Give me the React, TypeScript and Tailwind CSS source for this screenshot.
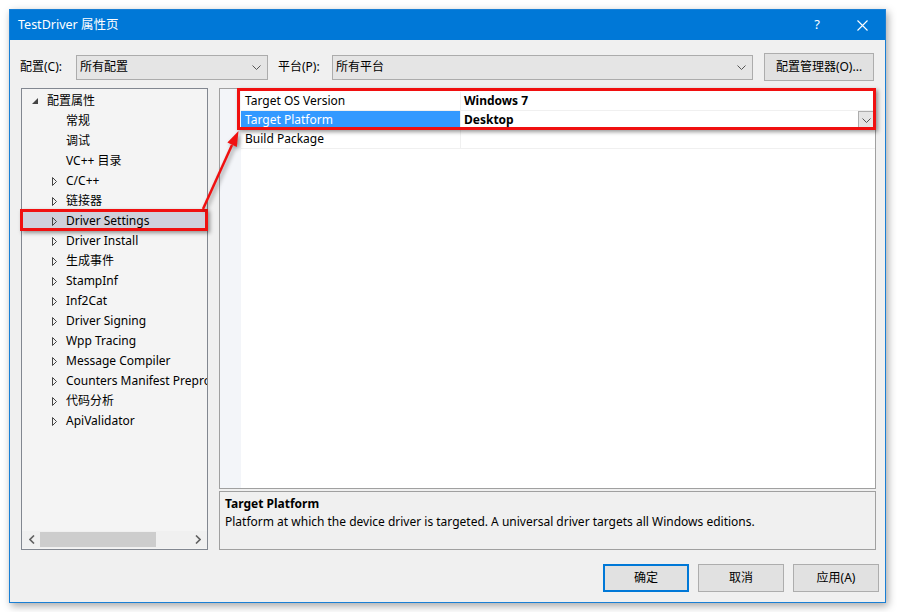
import React from "react"

const font = "font-['Segoe_UI','Noto_Sans','Noto_Sans_CJK_SC',sans-serif]"

type TreeItem = { label: string; kind: "root" | "leaf" | "closed"; selected?: boolean }

const treeItems: TreeItem[] = [
    { label: "配置属性", kind: "root" },
    { label: "常规", kind: "leaf" },
    { label: "调试", kind: "leaf" },
    { label: "VC++ 目录", kind: "leaf" },
    { label: "C/C++", kind: "closed" },
    { label: "链接器", kind: "closed" },
    { label: "Driver Settings", kind: "closed", selected: true },
    { label: "Driver Install", kind: "closed" },
    { label: "生成事件", kind: "closed" },
    { label: "StampInf", kind: "closed" },
    { label: "Inf2Cat", kind: "closed" },
    { label: "Driver Signing", kind: "closed" },
    { label: "Wpp Tracing", kind: "closed" },
    { label: "Message Compiler", kind: "closed" },
    { label: "Counters Manifest Preprocessor", kind: "closed" },
    { label: "代码分析", kind: "closed" },
    { label: "ApiValidator", kind: "closed" },
]

function Chevron({ className = "" }: { className?: string }) {
    return (
        <svg width="9" height="5" viewBox="0 0 9 5" className={`shrink-0 ${className}`}>
            <path d="M0.5 0.5 L4.5 4.5 L8.5 0.5" fill="none" stroke="#555" strokeWidth="1" />
        </svg>
    )
}

function TreeRow({ item }: { item: TreeItem }) {
    return (
        <div className={`h-[20px] flex items-center whitespace-nowrap ${item.selected ? "bg-[#cfd0db]" : ""}`}>
            {item.kind === "root" && (
                <>
                    <svg width="6" height="6" viewBox="0 0 6 6" className="shrink-0 ml-[10px] mr-[9px]">
                        <polygon points="6,0 6,6 0,6" fill="#444" />
                    </svg>
                    <span>{item.label}</span>
                </>
            )}
            {item.kind === "leaf" && <span className="ml-[44px]">{item.label}</span>}
            {item.kind === "closed" && (
                <>
                    <svg width="5" height="9" viewBox="0 0 5 9" className="shrink-0 ml-[30px] mr-[9px]">
                        <polygon points="0.5,0.5 4.5,4.5 0.5,8.5" fill="none" stroke="#444" strokeWidth="1" />
                    </svg>
                    <span>{item.label}</span>
                </>
            )}
        </div>
    )
}

function PropRow({ name, value, selected, dropdown }: { name: string; value: string; selected?: boolean; dropdown?: boolean }) {
    return (
        <div className="h-[19px] flex border-b border-[#f0f0f0]">
            <div className={`w-[219px] pl-[4px] flex items-center ${selected ? "bg-[#3399ff] text-white" : "text-black"}`}>{name}</div>
            <div className="flex-1 border-l border-[#f0f0f0] pl-[3px] flex items-center font-bold">
                <span className="flex-1">{value}</span>
                {dropdown && (
                    <div className="w-[17px] h-[18px] border border-[#adadad] bg-[#e5e5e5] flex items-center justify-center">
                        <Chevron />
                    </div>
                )}
            </div>
        </div>
    )
}

export default function App() {
    return (
        <div className={`relative w-[897px] h-[612px] bg-white pt-[9px] pl-[9px] text-[12px] text-black ${font}`}>
            <div className="w-[877px] h-[594px] border border-[#1a7fd4] bg-[#f0f0f0] shadow-[2px_3px_8px_rgba(0,0,0,0.35)] flex flex-col">
                {/* title bar */}
                <div className="h-[30px] bg-[#0078d7] flex items-center text-white">
                    <span className="ml-[8px] text-[12.5px]">TestDriver 属性页</span>
                    <span className="ml-auto text-[13px] mr-[37px]">?</span>
                    <svg width="11" height="11" viewBox="0 0 11 11" className="mr-[17px]">
                        <path d="M0.5 0.5 L10.5 10.5 M10.5 0.5 L0.5 10.5" stroke="white" strokeWidth="1.1" />
                    </svg>
                </div>

                {/* config row */}
                <div className="mt-[13px] h-[28px] flex items-center pl-[10px]">
                    <span className="w-[56px]">配置(C):</span>
                    <div className="w-[192px] h-[25px] border border-[#acacac] bg-[#e5e5e5] flex items-center pl-[3px] pr-[6px]">
                        <span className="flex-1">所有配置</span>
                        <Chevron />
                    </div>
                    <span className="ml-[10px] w-[54px]">平台(P):</span>
                    <div className="w-[421px] h-[25px] border border-[#acacac] bg-[#e5e5e5] flex items-center pl-[3px] pr-[6px]">
                        <span className="flex-1">所有平台</span>
                        <Chevron />
                    </div>
                    <button className="ml-[11px] w-[110px] h-[28px] border border-[#adadad] bg-[#e1e1e1] text-[12px]">配置管理器(O)...</button>
                </div>

                {/* main */}
                <div className="mt-[7px] flex pl-[11px]">
                    <div className="w-[187px] h-[462px] border border-[#828790] bg-[#f4f4f4] flex flex-col">
                        <div className="flex-1 overflow-hidden pt-[2px]">
                            {treeItems.map((item, i) => (
                                <TreeRow key={i} item={item} />
                            ))}
                        </div>
                        <div className="h-[17px] flex items-center bg-[#f0f0f0] mb-[1px]">
                            <svg width="6" height="9" viewBox="0 0 6 9" className="ml-[7px]">
                                <path d="M5 0.5 L1 4.5 L5 8.5" fill="none" stroke="#606060" strokeWidth="1.6" />
                            </svg>
                            <div className="ml-[5px] w-[116px] h-[15px] bg-[#cdcdcd]" />
                            <svg width="6" height="9" viewBox="0 0 6 9" className="ml-auto mr-[6px]">
                                <path d="M1 0.5 L5 4.5 L1 8.5" fill="none" stroke="#606060" strokeWidth="1.6" />
                            </svg>
                        </div>
                    </div>

                    <div className="ml-[11px] w-[657px] flex flex-col">
                        <div className="h-[401px] border border-[#a0a0a0] bg-white flex">
                            <div className="w-[21px] bg-[#f3f5f9]" />
                            <div className="flex-1 pt-[3px]">
                                <PropRow name="Target OS Version" value="Windows 7" />
                                <PropRow name="Target Platform" value="Desktop" selected dropdown />
                                <PropRow name="Build Package" value="" />
                            </div>
                        </div>
                        <div className="mt-[2px] h-[59px] border border-[#a0a0a0] bg-[#f0f0f0] px-[5px] pt-[3px]">
                            <div className="font-bold leading-[17px]">Target Platform</div>
                            <div className="leading-[17px] mt-[1px]">Platform at which the device driver is targeted. A universal driver targets all Windows editions.</div>
                        </div>
                    </div>
                </div>

                {/* buttons */}
                <div className="mt-[14px] flex justify-end pr-[6px] gap-[9px]">
                    <button className="w-[86px] h-[28px] border-2 border-[#0078d7] bg-[#e1e1e1]">确定</button>
                    <button className="w-[86px] h-[28px] border border-[#adadad] bg-[#e1e1e1]">取消</button>
                    <button className="w-[86px] h-[28px] border border-[#adadad] bg-[#e1e1e1]">应用(A)</button>
                </div>
            </div>

            {/* annotation overlays */}
            <div className="absolute left-[20px] top-[209px] w-[188px] h-[22px] border-[3px] border-[#f01010] shadow-[2px_2px_4px_rgba(0,0,0,0.4)]" />
            <div className="absolute left-[237px] top-[88px] w-[639px] h-[42px] border-[3px] border-[#f01010] shadow-[2px_2px_4px_rgba(0,0,0,0.4)]" />
            <svg className="absolute left-0 top-0 pointer-events-none" width="897" height="612" viewBox="0 0 897 612">
                <g style={{ filter: "drop-shadow(2px 2px 2px rgba(0,0,0,0.4))" }}>
                    <line x1="203" y1="209" x2="232" y2="145" stroke="#f01010" strokeWidth="2.5" />
                    <polygon points="238.5,131 236.8,147 227.4,142.6" fill="#f01010" />
                </g>
            </svg>
        </div>
    )
}
